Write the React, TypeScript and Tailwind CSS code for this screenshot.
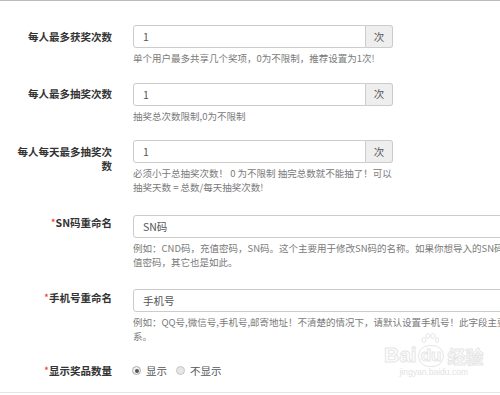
import { FC, ReactNode } from 'react'

const font = "font-['Noto_Sans_CJK_SC','Liberation_Sans',sans-serif]"

const Label: FC<{ text: string; required?: boolean; className?: string }> = ({ text, required, className = '' }) => (
  <div className={`w-[100px] ml-[12px] mr-[21px] shrink-0 text-right font-bold text-[10.5px] leading-[14px] text-[#333] ${className}`}>
    {required && <span className="text-[#e33] font-normal">*</span>}
    {text}
  </div>
)

const Help: FC<{ children: ReactNode }> = ({ children }) => (
  <div className="mt-[3px] text-[9.5px] leading-[14px] text-[#7a7a7a] whitespace-nowrap">{children}</div>
)

const CountInput: FC = () => (
  <div className="flex w-[260px] h-[23px]">
    <input
      readOnly
      defaultValue="1"
      className="flex-1 min-w-0 h-full border border-[#ccc] rounded-l-[3px] px-[9px] text-[10.5px] text-[#555] outline-none"
    />
    <span className="w-[27px] h-full flex items-center justify-center border border-l-0 border-[#ccc] bg-[#eee] rounded-r-[3px] text-[10.5px] text-[#555]">
      次
    </span>
  </div>
)

const TextInput: FC<{ value: string }> = ({ value }) => (
  <input
    readOnly
    defaultValue={value}
    className="w-[420px] h-[23px] border border-[#ccc] rounded-[3px] px-[9px] text-[10.5px] text-[#555] outline-none"
  />
)

const Radio: FC<{ checked?: boolean; label: string }> = ({ checked, label }) => (
  <label className="flex items-center gap-[5px] text-[10.5px] text-[#555]">
    <span
      className={`w-[9px] h-[9px] rounded-full border flex items-center justify-center ${
        checked ? 'border-[#aaa] bg-[#f2f2f2]' : 'border-[#c4c4c4] bg-[#e6e6e6]'
      }`}
    >
      {checked && <span className="w-[4px] h-[4px] rounded-full bg-[#555]" />}
    </span>
    {label}
  </label>
)

// faint baidu jingyan watermark over the bottom right
const Watermark: FC = () => (
  <div className="absolute left-[384px] top-[342px] flex flex-col items-center pointer-events-none">
    <div className="flex items-end font-bold text-[21px] leading-[24px] text-transparent [-webkit-text-stroke:1px_#e6e6e6] font-['Liberation_Sans',sans-serif]">
      <span>Bai</span>
      <span className="relative mx-[1px]">
        <svg className="absolute -top-[9px] left-[3px]" width="18" height="12" viewBox="0 0 18 12" fill="none" stroke="#e6e6e6">
          <ellipse cx="3" cy="7" rx="2" ry="2.5" />
          <ellipse cx="7" cy="3" rx="2" ry="2.5" />
          <ellipse cx="12" cy="3" rx="2" ry="2.5" />
          <ellipse cx="16" cy="7" rx="1.6" ry="2.3" />
        </svg>
        <span className="inline-block rounded-full border border-[#e6e6e6] px-[2px] text-[17px] leading-[20px]">du</span>
      </span>
      <span className={`${font} text-[18px] leading-[22px] ml-[2px]`}>经验</span>
    </div>
    <div className="text-[8.5px] leading-[11px] text-[#e2e2e2] font-['Liberation_Sans',sans-serif]">jingyan.baidu.com</div>
  </div>
)

export default function App() {
  return (
    <div className={`relative w-[500px] h-[395px] overflow-hidden bg-white ${font}`}>
      <div className="h-px bg-[#bcbcbc]" />
      <div className="h-[391px] pt-[24px] flex flex-col">
        <div className="flex items-start mb-[17.5px]">
          <Label text="每人最多获奖次数" className="pt-[4.5px]" />
          <div>
            <CountInput />
            <Help>单个用户最多共享几个奖项，0为不限制，推荐设置为1次!</Help>
          </div>
        </div>

        <div className="flex items-start mb-[17.5px]">
          <Label text="每人最多抽奖次数" className="pt-[4.5px]" />
          <div>
            <CountInput />
            <Help>抽奖总次数限制,0为不限制</Help>
          </div>
        </div>

        <div className="flex items-start mb-[17.5px]">
          <Label text="每人每天最多抽奖次数" className="pt-[4.5px]" />
          <div>
            <CountInput />
            <Help>
              必须小于总抽奖次数！ 0 为不限制 抽完总数就不能抽了！可以
              <br />
              抽奖天数 = 总数/每天抽奖次数!
            </Help>
          </div>
        </div>

        <div className="flex items-start mb-[17.5px]">
          <Label text="SN码重命名" required className="pt-[4.5px]" />
          <div>
            <TextInput value="SN码" />
            <Help>
              例如：CND码，充值密码，SN码。这个主要用于修改SN码的名称。如果你想导入的SN码是充
              <br />
              值密码，其它也是如此。
            </Help>
          </div>
        </div>

        <div className="flex items-start mb-[17.5px]">
          <Label text="手机号重命名" required className="pt-[4.5px]" />
          <div>
            <TextInput value="手机号" />
            <Help>
              例如：QQ号,微信号,手机号,邮寄地址！不清楚的情况下，请默认设置手机号！此字段主要用于中奖联
              <br />
              系。
            </Help>
          </div>
        </div>

        <div className="flex items-center h-[20px]">
          <Label text="显示奖品数量" required />
          <div className="flex items-center gap-[9px] ml-[-1px]">
            <Radio checked label="显示" />
            <Radio label="不显示" />
          </div>
        </div>
      </div>
      <div className="h-px bg-[#e4e4e4]" />
      <Watermark />
    </div>
  )
}
